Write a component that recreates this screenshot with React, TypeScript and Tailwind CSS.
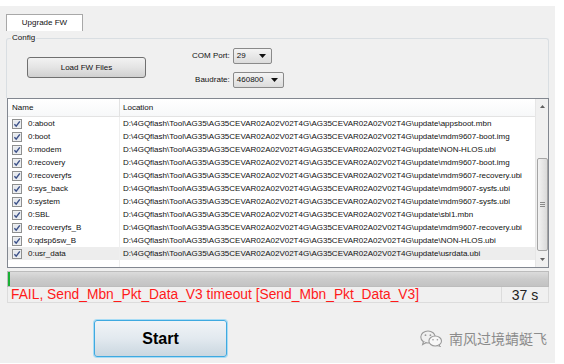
import React from "react";

const PREFIX = "D:\\4GQflash\\Tool\\AG35\\AG35CEVAR02A02V02T4G\\AG35CEVAR02A02V02T4G\\update\\";

const files: [string, string][] = [
  ["0:aboot", "appsboot.mbn"],
  ["0:boot", "mdm9607-boot.img"],
  ["0:modem", "NON-HLOS.ubi"],
  ["0:recovery", "mdm9607-boot.img"],
  ["0:recoveryfs", "mdm9607-recovery.ubi"],
  ["0:sys_back", "mdm9607-sysfs.ubi"],
  ["0:system", "mdm9607-sysfs.ubi"],
  ["0:SBL", "sbl1.mbn"],
  ["0:recoveryfs_B", "mdm9607-recovery.ubi"],
  ["0:qdsp6sw_B", "NON-HLOS.ubi"],
  ["0:usr_data", "usrdata.ubi"],
];

function Check() {
  return (
    <svg width="10" height="10" viewBox="0 0 10 10" className="shrink-0">
      <rect x="0.5" y="0.5" width="9" height="9" fill="#f4f4f4" stroke="#8e8f8f" />
      <rect x="1.5" y="1.5" width="7" height="7" fill="#e6e9ee" />
      <path d="M2.4 5.2 L4.2 7.2 L7.8 2.4" fill="none" stroke="#3b5088" strokeWidth="1.4" />
    </svg>
  );
}

function Combo({ value, width }: { value: string; width: string }) {
  return (
    <div
      className={`${width} h-[16px] flex items-center justify-between rounded-[2px] border border-[#8a8a8a] bg-gradient-to-b from-[#f4f4f4] to-[#dcdcdc] pl-[3px] pr-[5px]`}
    >
      <span>{value}</span>
      <svg width="7" height="4" viewBox="0 0 7 4">
        <path d="M0 0 H7 L3.5 4 Z" fill="#111" />
      </svg>
    </div>
  );
}

function WeChat() {
  return (
    <svg width="23" height="17" viewBox="0 0 23 17" className="shrink-0">
      <ellipse cx="8" cy="7" rx="7.2" ry="6" fill="#f0f0f0" stroke="#9a9a9a" strokeWidth="1.1" />
      <path d="M3.5 11.5 L2.6 14.6 L6.2 12.6" fill="#f0f0f0" stroke="#9a9a9a" strokeWidth="1.1" />
      <circle cx="5.5" cy="5.2" r="0.9" fill="#9a9a9a" />
      <circle cx="10.4" cy="5.2" r="0.9" fill="#9a9a9a" />
      <ellipse cx="15.2" cy="11" rx="6.3" ry="5" fill="#f8f8f8" stroke="#9a9a9a" strokeWidth="1.1" />
      <path d="M19 15 L20.6 16.6 L17.6 15.6" fill="#f8f8f8" stroke="#9a9a9a" strokeWidth="1" />
      <circle cx="13" cy="9.8" r="0.8" fill="#9a9a9a" />
      <circle cx="17.4" cy="9.8" r="0.8" fill="#9a9a9a" />
    </svg>
  );
}

export default function App() {
  return (
    <div className="w-[564px] h-[364px] bg-white pt-[6px] font-['Liberation_Sans',Arial,sans-serif] text-[8px] text-[#111]">
      <div className="w-[555px] h-[357px] bg-[#f0f0f0] px-[6px] pt-[8px] flex flex-col">
        {/* tab */}
        <div className="w-[77px] h-[17px] border border-b-0 border-[#a8a8a8] bg-white flex items-center justify-center">
          Upgrade FW
        </div>

        {/* config group */}
        <fieldset className="mt-[2px] h-[65px] border border-b-0 border-[#d9dee2] rounded-t-[3px]">
          <legend className="ml-[4px] px-[1px] leading-[10px]">Config</legend>
          <div className="flex">
            <button className="ml-[20px] mt-[14px] w-[119px] h-[21px] rounded-[3px] border border-[#707070] bg-gradient-to-b from-[#f2f2f2] via-[#e4e4e4] to-[#d0d0d0]">
              Load FW Files
            </button>
            <div className="ml-[46px] mt-[5px] grid grid-cols-[auto_auto] items-center gap-x-[3px] gap-y-[8px]">
              <span className="text-right">COM Port:</span>
              <Combo value="29" width="w-[39px]" />
              <span className="text-right">Baudrate:</span>
              <Combo value="460800" width="w-[51px]" />
            </div>
          </div>
        </fieldset>

        {/* file list */}
        <div className="ml-[1px] h-[170px] border border-[#828790] bg-white flex">
          <div className="flex-1 flex flex-col overflow-hidden">
            <div className="h-[18px] flex border-b border-[#e3e3e3] bg-gradient-to-b from-white to-[#f7f8f9]">
              <div className="w-[112px] pl-[4px] flex items-center border-r border-[#e3e3e3]">Name</div>
              <div className="pl-[3px] flex items-center">Location</div>
            </div>
            {files.map(([name, file], i) => (
              <div
                key={name}
                className={`h-[13px] flex ${i === files.length - 1 ? "bg-[#ededed]" : ""}`}
              >
                <div className="w-[112px] flex items-center gap-[6px] pl-[4px] border-r border-[#efefef]">
                  <Check />
                  <span>{name}</span>
                </div>
                <div className="pl-[3px] flex items-center whitespace-nowrap">
                  {PREFIX}
                  {file}
                </div>
              </div>
            ))}
            <div className="flex-1 flex">
              <div className="w-[112px] border-r border-[#efefef]" />
            </div>
          </div>
          {/* scrollbar */}
          <div className="w-[13px] bg-[#f0f0f0] border-l border-[#e6e6e6] flex flex-col items-center">
            <div className="h-[14px] flex items-center">
              <svg width="5" height="3" viewBox="0 0 5 3">
                <path d="M0 3 L2.5 0 L5 3 Z" fill="#606060" />
              </svg>
            </div>
            <div className="mt-[45px] w-[11px] h-[93px] rounded-[2px] border border-[#a5a5a5] bg-gradient-to-r from-[#f3f3f3] to-[#dadada] flex flex-col items-center justify-center gap-[1px]">
              <div className="w-[5px] h-px bg-[#8a8a8a]" />
              <div className="w-[5px] h-px bg-[#8a8a8a]" />
              <div className="w-[5px] h-px bg-[#8a8a8a]" />
            </div>
            <div className="flex-1 flex items-center">
              <svg width="5" height="3" viewBox="0 0 5 3">
                <path d="M0 0 L5 0 L2.5 3 Z" fill="#606060" />
              </svg>
            </div>
          </div>
        </div>

        {/* progress */}
        <div className="mt-[3px] ml-[1px] h-[16px] border border-[#bcbcbc] bg-gradient-to-b from-[#dcdcdc] via-[#cbcbcb] to-[#c3c3c3] flex">
          <div className="w-[2px] bg-[#1ab035]" />
        </div>

        {/* status */}
        <div className="ml-[1px] h-[16px] flex border-b border-x border-[#dcdcdc] text-[14px] leading-none">
          <div className="flex-1 flex items-center pl-[3px] text-[13.8px] text-[#ff1a1a]">
            FAIL, Send_Mbn_Pkt_Data_V3 timeout [Send_Mbn_Pkt_Data_V3]
          </div>
          <div className="w-[47px] flex items-center justify-center border-l border-[#dcdcdc] text-[#222]">37 s</div>
        </div>

        {/* bottom */}
        <div className="mt-[17px] flex items-center">
          <button className="ml-[88px] w-[133px] h-[37px] rounded-[3px] border border-[#3fa9e0] shadow-[0_0_0_1px_#a8dcf5] bg-gradient-to-b from-[#f1f4f7] via-[#e2e9ef] to-[#cad7e0] text-[16px] font-bold text-black">
            Start
          </button>
          <div className="ml-auto mr-[2px] flex items-center gap-[6px] text-[#8c8c8c] text-[14px] font-['Noto_Sans_CJK_SC',sans-serif]">
            <WeChat />
            <span>南风过境蜻蜓飞</span>
          </div>
        </div>
      </div>
    </div>
  );
}
